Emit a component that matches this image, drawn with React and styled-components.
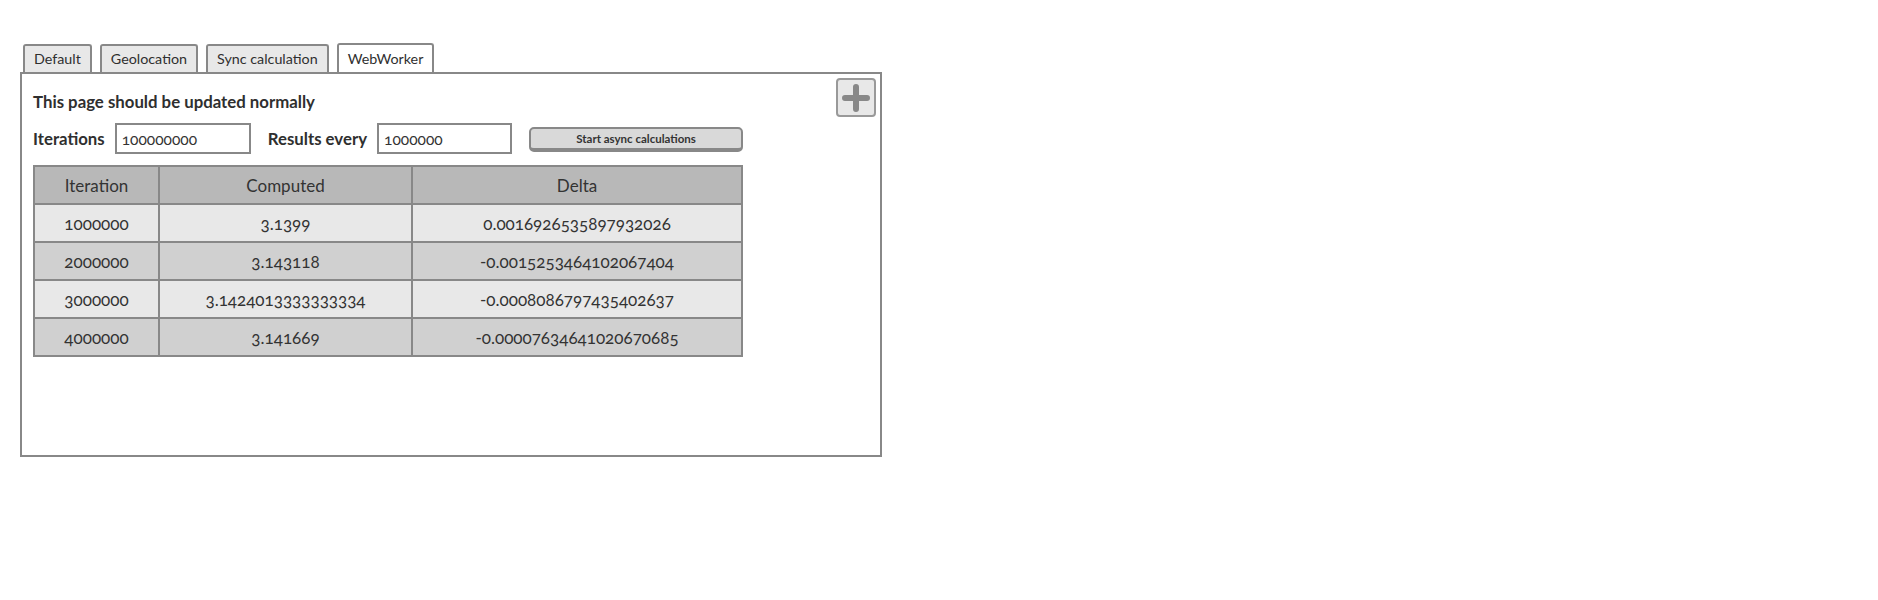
import React from "react";
import styled, { createGlobalStyle } from "styled-components";

const Global = createGlobalStyle`
  html, body { margin: 0; padding: 0; background: #fff; }
  body { font-family: Lato, "Noto Sans", "Liberation Sans", sans-serif; color: #333; }
`;

const Page = styled.div`
  padding: 43px 0 0 20px;
  width: 862px;
`;

const TabBar = styled.div`
  display: flex;
  align-items: flex-end;
  gap: 8px;
  padding-left: 3px;
  margin-bottom: -2px;
`;

const Tab = styled.div`
  box-sizing: border-box;
  height: ${(p) => (p.$active ? 31 : 30)}px;
  padding: 0 9px 3px;
  display: flex;
  align-items: center;
  font-size: 14.3px;
  color: #2f2f2f;
  background: ${(p) => (p.$active ? "#fff" : "#e8e8e8")};
  border: 2px solid #888;
  border-bottom: none;
  border-radius: 3px 3px 0 0;
  position: relative;
  z-index: 0;
`;

const Panel = styled.div`
  box-sizing: border-box;
  height: 385px;
  border: 2px solid #888;
  padding: 4px;
  display: flex;
  justify-content: space-between;
  align-items: flex-start;
  position: relative;
  z-index: 1;
`;

const Content = styled.div`
  padding: 14px 0 0 7px;
  display: flex;
  flex-direction: column;
`;

const Title = styled.div`
  font-weight: 700;
  font-size: 16.8px;
  line-height: 20px;
  color: #2f2f2f;
`;

const Controls = styled.div`
  display: flex;
  align-items: center;
  margin-top: 11px;
`;

const Label = styled.label`
  font-weight: 700;
  font-size: 16.8px;
  color: #2f2f2f;
  margin-right: 10px;
  margin-left: ${(p) => p.$offset || 0}px;
`;

const Input = styled.input`
  box-sizing: border-box;
  width: ${(p) => p.$w}px;
  height: 31px;
  border: 2px solid #888;
  padding: 0 5px;
  font-family: inherit;
  font-size: 15.5px;
  color: #333;
  font-variant-numeric: oldstyle-nums;
  outline: none;
  background: #fff;
`;

const Button = styled.button`
  box-sizing: border-box;
  margin-left: 17px;
  width: 214px;
  height: 25px;
  margin-top: 2px;
  border: 2px solid #888;
  border-bottom-width: 4px;
  border-radius: 5px;
  background: #d9d9d9;
  font-family: inherit;
  font-weight: 700;
  font-size: 11.5px;
  color: #333;
  padding: 0;
`;

const Table = styled.table`
  border-collapse: collapse;
  margin-top: 11px;
  font-size: 17px;
  color: #333;
  font-variant-numeric: oldstyle-nums;
`;

const Th = styled.th`
  width: ${(p) => p.$w}px;
  height: 36px;
  padding: 0;
  border: 2px solid #888;
  background: #b8b8b8;
  font-weight: 400;
  text-align: center;
`;

const Td = styled.td`
  height: 36px;
  padding: 0;
  border: 2px solid #888;
  background: ${(p) => (p.$odd ? "#e8e8e8" : "#d0d0d0")};
  text-align: center;
`;

const PlusButton = styled.div`
  box-sizing: border-box;
  width: 40px;
  height: 39px;
  border: 2px solid #999;
  border-radius: 4px;
  background: #e8e8e8;
  display: flex;
  align-items: center;
  justify-content: center;
  flex-shrink: 0;
`;

const rows = [
  ["1000000", "3.1399", "0.0016926535897932026"],
  ["2000000", "3.143118", "-0.0015253464102067404"],
  ["3000000", "3.1424013333333334", "-0.0008086797435402637"],
  ["4000000", "3.141669", "-0.00007634641020670685"],
];

export default function App() {
  return (
    <>
      <Global />
      <Page>
        <TabBar>
          <Tab>Default</Tab>
          <Tab>Geolocation</Tab>
          <Tab>Sync calculation</Tab>
          <Tab $active>WebWorker</Tab>
        </TabBar>
        <Panel>
          <Content>
            <Title>This page should be updated normally</Title>
            <Controls>
              <Label>Iterations</Label>
              <Input $w={136} defaultValue="100000000" />
              <Label $offset={17}>Results every</Label>
              <Input $w={135} defaultValue="1000000" />
              <Button>Start async calculations</Button>
            </Controls>
            <Table>
              <thead>
                <tr>
                  <Th $w={123}>Iteration</Th>
                  <Th $w={251}>Computed</Th>
                  <Th $w={328}>Delta</Th>
                </tr>
              </thead>
              <tbody>
                {rows.map((r, i) => (
                  <tr key={r[0]}>
                    {r.map((c) => (
                      <Td key={c} $odd={i % 2 === 0}>
                        {c}
                      </Td>
                    ))}
                  </tr>
                ))}
              </tbody>
            </Table>
          </Content>
          <PlusButton>
            <svg width="28" height="28" viewBox="0 0 28 28">
              <path
                d="M14 3 V25 M3 14 H25"
                stroke="#888"
                strokeWidth="6"
                strokeLinecap="round"
              />
            </svg>
          </PlusButton>
        </Panel>
      </Page>
    </>
  );
}
